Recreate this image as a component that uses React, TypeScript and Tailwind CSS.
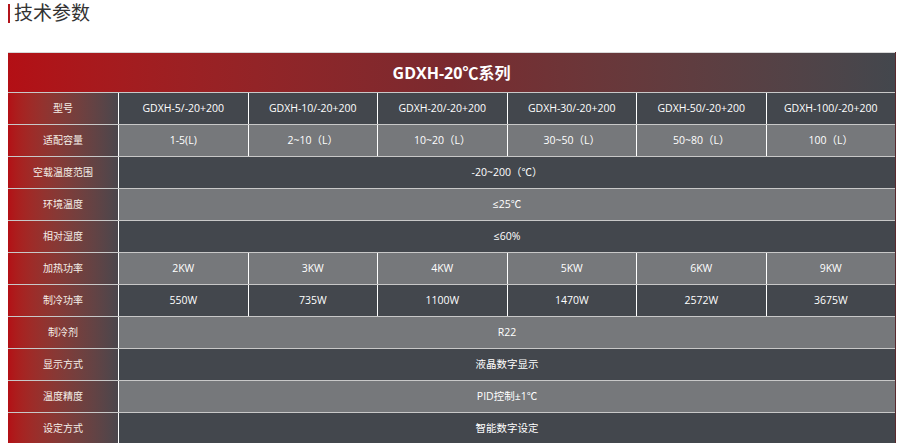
import React from "react";

const font = { fontFamily: '"Open Sans","Noto Sans CJK SC",sans-serif' };

type Row = { label: string; cells: string[]; dark: boolean };

const rows: Row[] = [
  { label: "型号", cells: ["GDXH-5/-20+200", "GDXH-10/-20+200", "GDXH-20/-20+200", "GDXH-30/-20+200", "GDXH-50/-20+200", "GDXH-100/-20+200"], dark: true },
  { label: "适配容量", cells: ["1-5(L)", "2~10（L）", "10~20（L）", "30~50（L）", "50~80（L）", "100（L）"], dark: false },
  { label: "空载温度范围", cells: ["-20~200（℃）"], dark: true },
  { label: "环境温度", cells: ["≤25℃"], dark: false },
  { label: "相对湿度", cells: ["≤60%"], dark: true },
  { label: "加热功率", cells: ["2KW", "3KW", "4KW", "5KW", "6KW", "9KW"], dark: false },
  { label: "制冷功率", cells: ["550W", "735W", "1100W", "1470W", "2572W", "3675W"], dark: true },
  { label: "制冷剂", cells: ["R22"], dark: false },
  { label: "显示方式", cells: ["液晶数字显示"], dark: true },
  { label: "温度精度", cells: ["PID控制±1℃"], dark: false },
  { label: "设定方式", cells: ["智能数字设定"], dark: true },
];

export default function App() {
  return (
    <div className="w-[900px] h-[443px] overflow-hidden bg-white" style={font}>
      <div className="flex items-center h-[25px] pl-[8px] pt-[1px]">
        <div className="w-[2px] h-[19px] bg-[#b3141b]" />
        <div className="ml-[4px] text-[19px] leading-[25px] text-[#333333]">技术参数</div>
      </div>
      <div className="ml-[8px] mt-[27px] w-[888px] border-r border-[#5a2a2e]">
        <div className="h-[40px] flex items-center justify-center border-t border-[#d8d8d8] bg-gradient-to-r from-[#b30f15] via-[#7a2a2f] to-[#43474d] text-white text-[16px] font-bold">
          GDXH-20℃系列
        </div>
        {rows.map((r, i) => (
          <div key={i} className="flex h-[32px] border-t border-[#c8c8c8]">
            <div className="w-[110px] shrink-0 flex items-center justify-center bg-gradient-to-r from-[#b30f15] to-[#4a464c] text-[#f4efe8] text-[10px]">
              {r.label}
            </div>
            {r.cells.map((c, j) => (
              <div
                key={j}
                className={`flex-1 flex items-center justify-center border-l border-white text-white text-[10.5px] ${r.dark ? "bg-[#43474d]" : "bg-[#76787b]"}`}
              >
                {c}
              </div>
            ))}
          </div>
        ))}
      </div>
    </div>
  );
}
